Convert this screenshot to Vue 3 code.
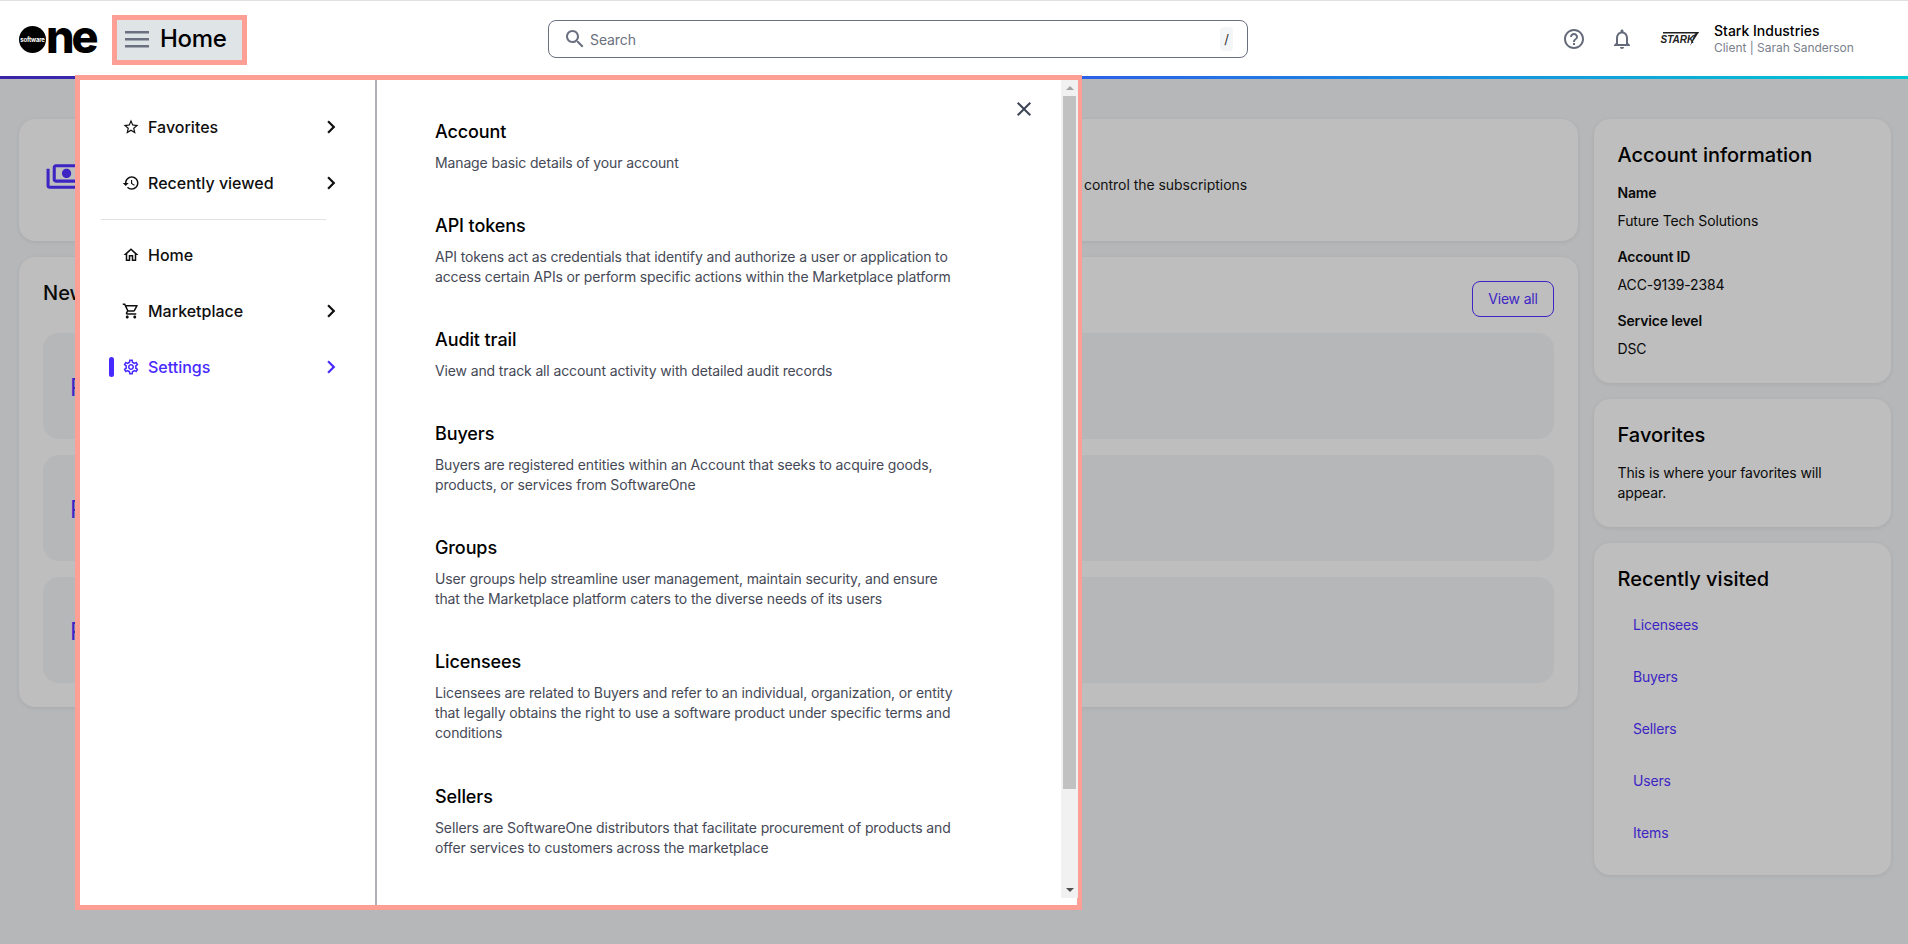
<template>
  <div class="app">
    <header class="topbar">
      <div class="logo">
        <span class="logo-dot">software</span>
        <span class="logo-ne">ne</span>
      </div>
      <button class="home-btn">
        <svg class="burger" width="24" height="24" viewBox="0 0 24 24"><path d="M0 4h24v2.5H0zM0 11h24v2.5H0zM0 18h24v2.5H0z" fill="#6b7080" /></svg>
        <span>Home</span>
      </button>
      <div class="search">
        <svg width="24" height="24" viewBox="0 0 24 24"><path :d="icons.search" fill="#6b7080" /></svg>
        <span class="search-text">Search</span>
        <span class="slash">/</span>
      </div>
      <div class="top-right">
        <svg width="24" height="24" viewBox="0 0 24 24"><path :d="icons.help" fill="#656b7b" /></svg>
        <svg class="bell" width="24" height="24" viewBox="0 0 24 24"><path :d="icons.bell" fill="#656b7b" /></svg>
        <svg class="stark" width="40" height="16" viewBox="0 0 40 16">
          <path d="M3 1h36l-1 1.4H3z" fill="#222" />
          <path d="M39 1l-9 14 3.6-9.6L35 2.4z" fill="#222" />
          <text x="0.5" y="11.5" class="stark-text">STARK</text>
        </svg>
        <div class="client">
          <div class="client-name">Stark Industries</div>
          <div class="client-sub">Client | Sarah Sanderson</div>
        </div>
      </div>
    </header>

    <main class="page">
      <div class="main-col">
        <section class="card sub-card">
          <svg class="money" width="37" height="37" viewBox="0 0 24 24"><path :d="icons.money" fill="#3d25c4" transform="matrix(-1 0 0 1 24 0)" /></svg>
          <p class="sub-desc">control the subscriptions</p>
        </section>
        <section class="card news-card">
          <div class="news-head">
            <h2 class="news-title">New products</h2>
            <button class="view-all">View all</button>
          </div>
          <div v-for="n in 3" :key="n" class="news-item">P</div>
        </section>
      </div>

      <aside class="side-col">
        <section class="card side-card">
          <h3 class="side-title">Account information</h3>
          <template v-for="f in accountFields" :key="f.label">
            <div class="field-label">{{ f.label }}</div>
            <div class="field-value">{{ f.value }}</div>
          </template>
        </section>
        <section class="card side-card">
          <h3 class="side-title">Favorites</h3>
          <p class="fav-text">This is where your favorites will appear.</p>
        </section>
        <section class="card side-card visited">
          <h3 class="side-title">Recently visited</h3>
          <a v-for="l in visited" :key="l" class="visited-link">{{ l }}</a>
        </section>
      </aside>
    </main>

    <!-- open menu -->
    <div class="panel">
      <nav class="nav">
        <template v-for="item in navItems" :key="item.label">
          <div :class="['nav-row', { active: item.active }]">
            <span v-if="item.active" class="nav-bar"></span>
            <svg width="18" height="18" viewBox="0 0 24 24"><path :d="item.icon" fill="currentColor" /></svg>
            <span class="nav-label">{{ item.label }}</span>
            <svg v-if="item.arrow" class="chev" width="26" height="26" viewBox="0 0 24 24"><path d="M10 6 8.59 7.41 13.17 12l-4.58 4.59L10 18l6-6z" fill="currentColor" /></svg>
          </div>
          <div v-if="item.divider" class="nav-divider"></div>
        </template>
      </nav>
      <div class="content">
        <div v-for="s in sections" :key="s.title" class="section">
          <h4 class="section-title">{{ s.title }}</h4>
          <p class="section-desc">{{ s.desc }}</p>
        </div>
        <svg class="close" width="24" height="24" viewBox="0 0 24 24"><path d="M19 6.41 17.59 5 12 10.59 6.41 5 5 6.41 10.59 12 5 17.59 6.41 19 12 13.41 17.59 19 19 17.59 13.41 12z" fill="#3d4555" /></svg>
      </div>
      <div class="scrollbar">
        <div class="track">
          <div class="arrow-cell"><span class="arrow up"></span></div>
          <div class="thumb"></div>
          <div class="arrow-cell bottom"><span class="arrow down"></span></div>
        </div>
      </div>
    </div>
  </div>
</template>

<script setup>
const icons = {
  search: 'M15.5 14h-.79l-.28-.27C15.41 12.59 16 11.11 16 9.5 16 5.91 13.09 3 9.5 3S3 5.91 3 9.5 5.91 16 9.5 16c1.61 0 3.09-.59 4.23-1.57l.27.28v.79l5 4.99L20.49 19l-4.99-5zm-6 0C7.01 14 5 11.99 5 9.5S7.01 5 9.5 5 14 7.01 14 9.5 11.99 14 9.5 14z',
  help: 'M11 18h2v-2h-2v2zm1-16C6.48 2 2 6.48 2 12s4.48 10 10 10 10-4.48 10-10S17.52 2 12 2zm0 18c-4.41 0-8-3.59-8-8s3.59-8 8-8 8 3.59 8 8-3.59 8-8 8zm0-14c-2.21 0-4 1.79-4 4h2c0-1.1.9-2 2-2s2 .9 2 2c0 2-3 1.75-3 5h2c0-2.25 3-2.5 3-5 0-2.21-1.79-4-4-4z',
  bell: 'M12 22c1.1 0 2-.9 2-2h-4c0 1.1.9 2 2 2zm6-6v-5c0-3.07-1.63-5.64-4.5-6.32V4c0-.83-.67-1.5-1.5-1.5s-1.5.67-1.5 1.5v.68C7.64 5.36 6 7.92 6 11v5l-2 2v1h16v-1l-2-2zm-2 1H8v-6c0-2.48 1.51-4.5 4-4.5s4 2.02 4 4.5v6z',
  money: 'M19 14V6c0-1.1-.9-2-2-2H3c-1.1 0-2 .9-2 2v8c0 1.1.9 2 2 2h14c1.1 0 2-.9 2-2zm-2 0H3V6h14v8zm-7-7c-1.66 0-3 1.34-3 3s1.34 3 3 3 3-1.34 3-3-1.34-3-3-3zm13 0v11c0 1.1-.9 2-2 2H4v-2h17V7h2z',
  star: 'M22 9.24l-7.19-.62L12 2 9.19 8.63 2 9.24l5.46 4.73L5.82 21 12 17.27 18.18 21l-1.63-7.03L22 9.24zM12 15.4l-3.76 2.27 1-4.28-3.32-2.88 4.38-.38L12 6.1l1.71 4.04 4.38.38-3.32 2.88 1 4.28L12 15.4z',
  history: 'M13 3c-4.97 0-9 4.03-9 9H1l3.89 3.89.07.14L9 12H6c0-3.87 3.13-7 7-7s7 3.13 7 7-3.13 7-7 7c-1.93 0-3.68-.79-4.94-2.06l-1.42 1.42C8.27 19.99 10.51 21 13 21c4.97 0 9-4.03 9-9s-4.03-9-9-9zm-1 5v5l4.28 2.54.72-1.21-3.5-2.08V8H12z',
  home: 'M12 5.69l5 4.5V18h-2v-6H9v6H7v-7.81l5-4.5M12 3L2 12h3v8h6v-6h2v6h6v-8h3L12 3z',
  cart: 'M15.55 13c.75 0 1.41-.41 1.75-1.03l3.58-6.49c.37-.66-.11-1.48-.87-1.48H5.21l-.94-2H1v2h2l3.6 7.59-1.35 2.44C4.52 15.37 5.48 17 7 17h12v-2H7l1.1-2h7.45zM6.16 6h12.15l-2.76 5H8.53L6.16 6zM7 18c-1.1 0-1.99.9-1.99 2S5.9 22 7 22s2-.9 2-2-.9-2-2-2zm10 0c-1.1 0-1.99.9-1.99 2s.89 2 1.99 2 2-.9 2-2-.9-2-2-2z',
  gear: 'M19.43 12.98c.04-.32.07-.64.07-.98 0-.34-.03-.66-.07-.98l2.11-1.65c.19-.15.24-.42.12-.64l-2-3.46c-.09-.16-.26-.25-.44-.25-.06 0-.12.01-.17.03l-2.49 1c-.52-.4-1.08-.73-1.69-.98l-.38-2.65C14.46 2.18 14.25 2 14 2h-4c-.25 0-.46.18-.49.42l-.38 2.65c-.61.25-1.17.59-1.69.98l-2.49-1c-.06-.02-.12-.03-.18-.03-.17 0-.34.09-.43.25l-2 3.46c-.13.22-.07.49.12.64l2.11 1.65c-.04.32-.07.65-.07.98 0 .33.03.66.07.98l-2.11 1.65c-.19.15-.24.42-.12.64l2 3.46c.09.16.26.25.44.25.06 0 .12-.01.17-.03l2.49-1c.52.4 1.08.73 1.69.98l.38 2.65c.03.24.24.42.49.42h4c.25 0 .46-.18.49-.42l.38-2.65c.61-.25 1.17-.59 1.69-.98l2.49 1c.06.02.12.03.18.03.17 0 .34-.09.43-.25l2-3.46c.12-.22.07-.49-.12-.64l-2.11-1.65zm-1.98-1.71c.04.31.05.52.05.73 0 .21-.02.43-.05.73l-.14 1.13.89.7 1.08.84-.7 1.21-1.27-.51-1.04-.42-.9.68c-.43.32-.84.56-1.25.73l-1.06.43-.16 1.13-.2 1.35h-1.4l-.19-1.35-.16-1.13-1.06-.43c-.43-.18-.83-.41-1.23-.71l-.91-.7-1.06.43-1.27.51-.7-1.21 1.08-.84.89-.7-.14-1.13c-.03-.31-.05-.54-.05-.74s.02-.43.05-.73l.14-1.13-.89-.7-1.08-.84.7-1.21 1.27.51 1.04.42.9-.68c.43-.32.84-.56 1.25-.73l1.06-.43.16-1.13.2-1.35h1.39l.19 1.35.16 1.13 1.06.43c.43.18.83.41 1.23.71l.91.7 1.06-.43 1.27-.51.7 1.21-1.07.85-.89.7.14 1.13zM12 8c-2.21 0-4 1.79-4 4s1.79 4 4 4 4-1.79 4-4-1.79-4-4-4zm0 6c-1.1 0-2-.9-2-2s.9-2 2-2 2 .9 2 2-.9 2-2 2z'
}

const navItems = [
  { label: 'Favorites', icon: icons.star, arrow: true },
  { label: 'Recently viewed', icon: icons.history, arrow: true, divider: true },
  { label: 'Home', icon: icons.home },
  { label: 'Marketplace', icon: icons.cart, arrow: true },
  { label: 'Settings', icon: icons.gear, arrow: true, active: true }
]

const sections = [
  { title: 'Account', desc: 'Manage basic details of your account' },
  { title: 'API tokens', desc: 'API tokens act as credentials that identify and authorize a user or application to access certain APIs or perform specific actions within the Marketplace platform' },
  { title: 'Audit trail', desc: 'View and track all account activity with detailed audit records' },
  { title: 'Buyers', desc: 'Buyers are registered entities within an Account that seeks to acquire goods, products, or services from SoftwareOne' },
  { title: 'Groups', desc: 'User groups help streamline user management, maintain security, and ensure that the Marketplace platform caters to the diverse needs of its users' },
  { title: 'Licensees', desc: 'Licensees are related to Buyers and refer to an individual, organization, or entity that legally obtains the right to use a software product under specific terms and conditions' },
  { title: 'Sellers', desc: 'Sellers are SoftwareOne distributors that facilitate procurement of products and offer services to customers across the marketplace' }
]

const accountFields = [
  { label: 'Name', value: 'Future Tech Solutions' },
  { label: 'Account ID', value: 'ACC-9139-2384' },
  { label: 'Service level', value: 'DSC' }
]

const visited = ['Licensees', 'Buyers', 'Sellers', 'Users', 'Items']
</script>

<style>
body {
  margin: 0;
  background: #b6b7b9;
}
</style>

<style scoped>
.app {
  position: relative;
  height: 944px;
  overflow: hidden;
  font-family: Inter, "Liberation Sans", sans-serif;
  color: #0a0a0a;
  background: #b6b7b9;
}

/* header */
.topbar {
  height: 79px;
  box-sizing: border-box;
  display: flex;
  align-items: center;
  padding: 1px 0 3px 19px;
  background: #fff;
  border-top: 1px solid #e0e0e0;
  position: relative;
}
.topbar::after {
  content: "";
  position: absolute;
  left: 0;
  right: 0;
  bottom: 0;
  height: 3px;
  background: linear-gradient(90deg, #3a24a8 0%, #2a62e8 58%, #00c9d2 100%);
}
.logo {
  display: flex;
  align-items: center;
  width: 78px;
  height: 28px;
}
.logo-dot {
  width: 27px;
  height: 27px;
  flex: none;
  border-radius: 50%;
  background: #000;
  color: #fff;
  font-size: 6px;
  font-weight: 700;
  line-height: 27px;
  text-align: center;
  letter-spacing: -0.2px;
}
.logo-ne {
  font-size: 45px;
  line-height: 28px;
  font-weight: 800;
  letter-spacing: -3.2px;
  color: #000;
  margin-top: -5px;
}
.home-btn {
  margin: 2px 0 0 15px;
  width: 135px;
  height: 50px;
  box-sizing: border-box;
  border: 5px solid #fe9f96;
  background: #dfe4e6;
  display: flex;
  align-items: center;
  gap: 11px;
  padding: 0 0 3px 8px;
  font: 500 24px Inter, "Liberation Sans", sans-serif;
  letter-spacing: -0.3px;
  color: #000;
}
.search {
  margin-left: 301px;
  width: 700px;
  height: 38px;
  box-sizing: border-box;
  border: 1px solid #6b7080;
  border-radius: 8px;
  display: flex;
  align-items: center;
  padding: 0 14px 0 14px;
}
.search-text {
  margin-left: 3px;
  font-size: 14px;
  letter-spacing: -0.1px;
  color: #6b7080;
}
.slash {
  margin-left: auto;
  width: 13px;
  height: 24px;
  line-height: 24px;
  text-align: center;
  border-radius: 4px;
  background: #f4f5f6;
  font-size: 13px;
  color: #333;
}
.top-right {
  margin-left: 314px;
  display: flex;
  align-items: center;
}
.bell {
  margin-left: 24px;
}
.stark {
  margin-left: 26px;
}
.stark-text {
  font: italic 800 10px "Liberation Sans", sans-serif;
  fill: #222;
}
.client {
  margin-left: 14px;
  padding-bottom: 1px;
}
.client-name {
  font-size: 14px;
  line-height: 19px;
  font-weight: 500;
  color: #000;
}
.client-sub {
  font-size: 12px;
  line-height: 16px;
  letter-spacing: -0.03px;
  color: #7a7f8d;
}

/* page behind the menu */
.page {
  display: flex;
  gap: 16px;
  padding: 40px 17px 0 19px;
}
.card {
  background: #bebebe;
  border-radius: 16px;
  box-sizing: border-box;
  box-shadow: 0 1px 4px rgba(0, 0, 0, 0.08);
}
.main-col {
  width: 1559px;
  display: flex;
  flex-direction: column;
  gap: 16px;
}
.sub-card {
  height: 122px;
  display: flex;
  padding: 39px 0 0 25.5px;
}
.money {
  flex: none;
}
.sub-desc {
  margin: 17px 0 0 1002.5px;
  font-size: 14px;
  line-height: 20px;
  letter-spacing: -0.04px;
  color: #111;
  white-space: nowrap;
}
.news-card {
  padding: 24px;
  height: 450px;
}
.news-head {
  display: flex;
  justify-content: space-between;
  height: 36px;
  margin-bottom: 16px;
}
.news-title {
  margin: 0;
  font-size: 20px;
  line-height: 24px;
  font-weight: 500;
}
.view-all {
  width: 82px;
  height: 36px;
  box-sizing: border-box;
  border: 1px solid #3d25c4;
  border-radius: 8px;
  background: none;
  color: #3d25c4;
  padding: 0 0 1px;
  font: 400 14px Inter, "Liberation Sans", sans-serif;
  letter-spacing: -0.17px;
}
.news-item {
  height: 106px;
  box-sizing: border-box;
  margin-bottom: 16px;
  padding: 41px 0 0 27px;
  border-radius: 16px;
  background: #b6b7b9;
  color: #3d25c4;
  font-size: 24px;
  line-height: 28px;
}
.side-col {
  width: 297px;
  display: flex;
  flex-direction: column;
  gap: 16px;
}
.side-card {
  padding: 24px 24px 24px 23.5px;
}
.side-title {
  margin: 0 0 16px;
  font-size: 20px;
  line-height: 24px;
  font-weight: 500;
  color: #000;
}
.field-label {
  font-size: 14px;
  line-height: 20px;
  font-weight: 600;
  letter-spacing: -0.17px;
}
.field-value {
  font-size: 14px;
  line-height: 20px;
  letter-spacing: -0.13px;
  margin: 8px 0 16px;
}
.field-value:last-child {
  margin-bottom: 0;
}
.fav-text {
  margin: 0;
  font-size: 14px;
  line-height: 20px;
  letter-spacing: -0.13px;
  width: 230px;
}
.visited {
  height: 332px;
}
.visited .side-title {
  margin-bottom: 8px;
}
.visited-link {
  display: block;
  height: 52px;
  line-height: 52px;
  padding-left: 15.5px;
  font-size: 14px;
  letter-spacing: -0.17px;
  color: #3d25c4;
}

/* open menu */
.panel {
  position: absolute;
  left: 75px;
  top: 75px;
  width: 1007px;
  height: 835px;
  box-sizing: border-box;
  border: 5px solid #fe9f96;
  background: #fff;
  display: flex;
}
.nav {
  width: 297px;
  flex: none;
  box-sizing: border-box;
  border-right: 2px solid #adb0b9;
  padding: 19px 0 0 21px;
}
.nav-row {
  position: relative;
  width: 243px;
  height: 56px;
  display: flex;
  align-items: center;
  gap: 8px;
  padding-left: 21px;
  box-sizing: border-box;
  font-size: 16px;
  font-weight: 500;
  color: #0f0f0f;
}
.nav-row.active {
  color: #472aff;
}
.nav-bar {
  position: absolute;
  left: 8px;
  top: 18px;
  width: 5px;
  height: 20px;
  border-radius: 3px;
  background: #472aff;
}
.chev {
  margin-left: auto;
}
.nav-divider {
  width: 225px;
  height: 1px;
  margin: 8px 0 7px;
  background: #e0e2e5;
}
.content {
  position: relative;
  flex: 1;
  padding: 40px 0 0 58px;
  display: flex;
  flex-direction: column;
  gap: 41.1px;
}
.section-title {
  margin: 0 0 9px;
  font-size: 18px;
  line-height: 24px;
  font-weight: 500;
  letter-spacing: -0.1px;
  color: #000;
}
.section-desc {
  margin: 0;
  width: 522px;
  font-size: 14px;
  line-height: 20px;
  letter-spacing: -0.13px;
  color: #454956;
}
.close {
  position: absolute;
  left: 635px;
  top: 17px;
}
.scrollbar {
  width: 17px;
  flex: none;
  margin-right: -1px;
}
.track {
  height: 818px;
  background: #f1f1f1;
  display: flex;
  flex-direction: column;
  align-items: center;
}
.arrow-cell {
  height: 16px;
  display: flex;
  align-items: center;
  justify-content: center;
}
.arrow-cell.bottom {
  margin-top: auto;
}
.arrow {
  width: 0;
  height: 0;
  border-left: 4px solid transparent;
  border-right: 4px solid transparent;
}
.arrow.up {
  border-bottom: 4px solid #a3a3a3;
}
.arrow.down {
  border-top: 4px solid #505050;
}
.thumb {
  width: 13px;
  height: 693px;
  background: #c1c1c1;
}
</style>
